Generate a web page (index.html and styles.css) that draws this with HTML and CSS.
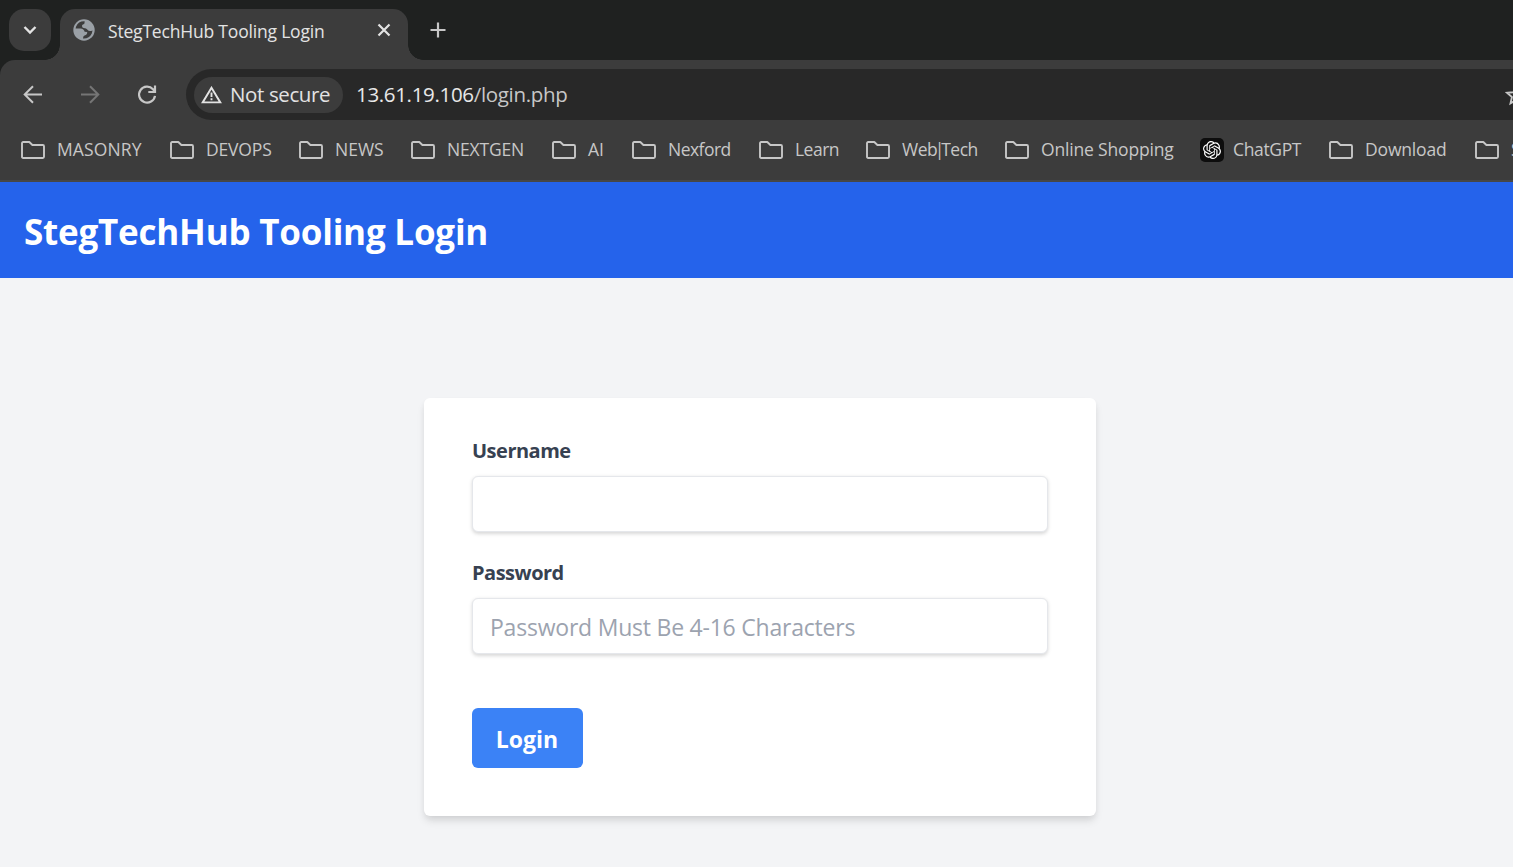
FILE: index.html
```html
<!DOCTYPE html>
<html lang="en">
<head>
<meta charset="utf-8">
<title>StegTechHub Tooling Login</title>
<link rel="stylesheet" href="styles.css">
</head>
<body>
<svg class="defs" aria-hidden="true">
  <symbol id="folder" viewBox="0 0 24 18"><path d="M1 2.200Q1 1 2.200 1H8.300L11.400 4H21.800Q23 4 23 5.200V15.800Q23 17 21.800 17H2.200Q1 17 1 15.800Z" fill="none" stroke="currentColor" stroke-width="1.900" stroke-linejoin="round"/></symbol>
</svg>
<div class="browser">
  <div class="tabstrip">
    <div class="tab-search"><svg width="16" height="10" viewBox="0 0 16 10"><path d="M2.500 2 8 7.500 13.500 2" fill="none" stroke="currentColor" stroke-width="2.400"/></svg></div>
    <div class="tab">
      <svg class="globe" width="22" height="22" viewBox="0 0 22 22"><circle cx="11" cy="11" r="10.700" fill="#9aa0a6"/><path d="M11.800 2.400Q5.500 2 3 7.800L2.600 9.400H7.500Q11 9.600 11.600 12.800L14.200 13Q14.500 16 11.500 16.400 10 16.700 10 19.500 16 20 18.800 14.500L19.500 11.500Q16 12.800 14.500 10.800 13.500 9.200 10.500 9 8.800 8.500 9 6.500 9.500 5.300 11.200 5.100Z" fill="#3c3c3c"/></svg>
      <span class="tab-title">StegTechHub Tooling Login</span>
      <svg class="tab-close" width="14" height="14" viewBox="0 0 14 14"><path d="M1.500 1.500 12.500 12.500M12.500 1.500 1.500 12.500" stroke="currentColor" stroke-width="2.200"/></svg>
    </div>
    <svg class="new-tab" width="16" height="16" viewBox="0 0 16 16"><path d="M8 .5V15.500M.5 8H15.500" stroke="#c7c7c7" stroke-width="2.200"/></svg>
  </div>
  <div class="toolbar">
    <svg class="nav" width="20" height="20" viewBox="0 0 20 20"><path d="M19 9.500H2.500M10 1.200 1.700 9.500 10 17.800" fill="none" stroke="currentColor" stroke-width="2"/></svg>
    <svg class="nav nav-off" width="20" height="20" viewBox="0 0 20 20"><path d="M1 9.500H17.500M10 1.200 18.300 9.500 10 17.800" fill="none" stroke="currentColor" stroke-width="2"/></svg>
    <svg class="nav" width="20" height="20" viewBox="0 0 20 20"><path d="M18 10.800A8 8 0 1 1 16 4.200L18 6.500M18 .5V7H11.300" fill="none" stroke="currentColor" stroke-width="2.200"/></svg>
    <div class="omnibox">
      <div class="chip">
        <svg width="22" height="18" viewBox="0 0 22 18"><path d="M10.500 1.700 19.300 16.400H1.700Z" fill="none" stroke="currentColor" stroke-width="1.900"/><path d="M10.500 6.500V11M10.500 12.300V14.300" stroke="currentColor" stroke-width="1.900"/></svg>
        <span class="chip-text">Not secure</span>
      </div>
      <span class="url">13.61.19.106<span class="path">/login.php</span></span>
      <svg class="star" width="22" height="22" viewBox="0 0 24 24"><path d="M12 2.500 14.700 9 21.800 9.600 16.400 14.200 18 21.100 12 17.400 6 21.100 7.600 14.200 2.200 9.600 9.300 9Z" fill="none" stroke="currentColor" stroke-width="2"/></svg>
    </div>
  </div>
  <div class="bookmarks">
    <div class="bm caps-wide"><svg class="folder"><use href="#folder"/></svg><span>MASONRY</span></div>
    <div class="bm caps"><svg class="folder"><use href="#folder"/></svg><span>DEVOPS</span></div>
    <div class="bm"><svg class="folder"><use href="#folder"/></svg><span>NEWS</span></div>
    <div class="bm caps"><svg class="folder"><use href="#folder"/></svg><span>NEXTGEN</span></div>
    <div class="bm"><svg class="folder"><use href="#folder"/></svg><span>AI</span></div>
    <div class="bm tight"><svg class="folder"><use href="#folder"/></svg><span>Nexford</span></div>
    <div class="bm tight"><svg class="folder"><use href="#folder"/></svg><span>Learn</span></div>
    <div class="bm tight"><svg class="folder"><use href="#folder"/></svg><span>Web<span class="bar">|</span>Tech</span></div>
    <div class="bm caps"><svg class="folder"><use href="#folder"/></svg><span>Online Shopping</span></div>
    <div class="bm bm-gpt"><div class="gpt"><svg width="18" height="18" viewBox="0 0 24 24"><path fill="#fff" d="M22.2819 9.8211a5.9847 5.9847 0 0 0-.5157-4.9108 6.0462 6.0462 0 0 0-6.5098-2.9A6.0651 6.0651 0 0 0 4.9807 4.1818a5.9847 5.9847 0 0 0-3.9977 2.9 6.0462 6.0462 0 0 0 .7427 7.0966 5.98 5.98 0 0 0 .511 4.9107 6.051 6.051 0 0 0 6.5146 2.9001A5.9847 5.9847 0 0 0 13.2599 24a6.0557 6.0557 0 0 0 5.7718-4.2058 5.9894 5.9894 0 0 0 3.9977-2.9001 6.0557 6.0557 0 0 0-.7475-7.0729zm-9.022 12.6081a4.4755 4.4755 0 0 1-2.8764-1.0408l.1419-.0804 4.7783-2.7582a.7948.7948 0 0 0 .3927-.6813v-6.7369l2.02 1.1686a.071.071 0 0 1 .038.052v5.5826a4.504 4.504 0 0 1-4.4945 4.4944zm-9.6607-4.1254a4.4708 4.4708 0 0 1-.5346-3.0137l.142.0852 4.783 2.7582a.7712.7712 0 0 0 .7806 0l5.8428-3.3685v2.3324a.0804.0804 0 0 1-.0332.0615L9.74 19.9502a4.4992 4.4992 0 0 1-6.1408-1.6464zM2.3408 7.8956a4.485 4.485 0 0 1 2.3655-1.9728V11.6a.7664.7664 0 0 0 .3879.6765l5.8144 3.3543-2.0201 1.1685a.0757.0757 0 0 1-.071 0l-4.8303-2.7865A4.504 4.504 0 0 1 2.3408 7.872zm16.5963 3.8558L13.1038 8.364 15.1192 7.2a.0757.0757 0 0 1 .071 0l4.8303 2.7913a4.4944 4.4944 0 0 1-.6765 8.1042v-5.6772a.79.79 0 0 0-.407-.667zm2.0107-3.0231l-.142-.0852-4.7735-2.7818a.7759.7759 0 0 0-.7854 0L9.409 9.2297V6.8974a.0662.0662 0 0 1 .0284-.0615l4.8303-2.7866a4.4992 4.4992 0 0 1 6.6802 4.66zM8.3065 12.863l-2.02-1.1638a.0804.0804 0 0 1-.038-.0567V6.0742a4.4992 4.4992 0 0 1 7.3757-3.4537l-.142.0805L8.704 5.459a.7948.7948 0 0 0-.3927.6813zm1.0976-2.3654l2.602-1.4998 2.6069 1.4998v2.9994l-2.5974 1.4997-2.6067-1.4997Z"/></svg></div><span>ChatGPT</span></div>
    <div class="bm caps"><svg class="folder"><use href="#folder"/></svg><span>Download</span></div>
    <div class="bm"><svg class="folder"><use href="#folder"/></svg><span>S</span></div>
  </div>
</div>
<header class="site-header"><h1>StegTechHub Tooling Login</h1></header>
<main>
  <form class="card">
    <label for="user">Username</label>
    <input id="user" type="text">
    <label for="pass">Password</label>
    <input id="pass" type="password" placeholder="Password Must Be 4-16 Characters">
    <button type="button">Login</button>
  </form>
</main>
</body>
</html>
```
FILE: styles.css
```css
* { box-sizing: border-box; }
body { margin: 0; height: 867px; overflow: hidden; background: #f3f4f6; font-family: "Segoe UI", "Open Sans", "Noto Sans", sans-serif; }
svg { display: block; flex: none; }
.defs { display: none; }
.browser { background: #1f2120; color: #e3e3e3; }
.tabstrip { display: flex; height: 60px; padding: 9px 0 0 9px; }
.tab-search { width: 42px; height: 42px; border-radius: 15px; background: #3c3c3c; display: grid; place-items: center; }
.tab { position: relative; display: flex; align-items: center; width: 348px; height: 51px; margin-left: 9px; padding: 0 17px 9px 13px; background: #3c3c3c; border-radius: 15px 15px 0 0; }
.tab::before, .tab::after { content: ""; position: absolute; bottom: 0; width: 15px; height: 15px; }
.tab::before { right: 100%; background: radial-gradient(circle at 0 0, transparent 14.500px, #3c3c3c 15px); }
.tab::after { left: 100%; background: radial-gradient(circle at 100% 0, transparent 14.500px, #3c3c3c 15px); }
.tab-title { flex: 1; margin-left: 13px; padding-top: 2px; font-size: 17.500px; letter-spacing: -.19px; white-space: nowrap; }
.new-tab { margin: 13px 0 0 22px; }
.toolbar { display: flex; align-items: center; gap: 37px; height: 60px; padding-left: 23px; padding-top: 9px; background: #3c3c3c; border-radius: 15px 0 0 0; color: #c7c7c7; }
.nav-off { color: #757575; }
.omnibox { display: flex; align-items: center; flex: 1; height: 51px; margin-left: -8px; padding-left: 8px; background: #282828; border-radius: 26px 0 0 26px; overflow: hidden; }
.chip { display: flex; align-items: center; width: 149px; height: 36px; padding-left: 7px; border-radius: 18px; background: #3c3c3c; color: #e3e3e3; }
.chip-text { margin-left: 7px; padding-bottom: 2px; font-size: 20.500px; letter-spacing: -.38px; white-space: nowrap; }
.url { flex: 1; margin-left: 13px; padding-bottom: 2px; font-size: 20.500px; letter-spacing: -.33px; color: #e8e8e8; white-space: nowrap; }
.path { color: #c7c7c7; }
.star { margin-right: -14px; }
.bookmarks { display: grid; grid-template-columns: 149px 129px 112px 141px 80px 127px 107px 139px 195px 129px 146px 60px; align-items: center; height: 62px; padding: 0 0 0 21px; background: #3c3c3c; border-bottom: 2px solid #474747; color: #c7c7c7; font-size: 17.500px; overflow: hidden; }
.bm { display: flex; align-items: center; gap: 12px; white-space: nowrap; }
.bm > span { padding-bottom: 2px; }
.caps-wide { letter-spacing: .13px; }
.caps { letter-spacing: -.17px; }
.tight { letter-spacing: -.52px; }
.bar { margin: 0 -2.500px; }
.folder { width: 24px; height: 18px; }
.gpt { width: 24px; height: 24px; border-radius: 5px; background: #0d0d0d; display: grid; place-items: center; }
.bm-gpt { gap: 9px; letter-spacing: -.35px; }
.site-header { display: flex; align-items: center; height: 96px; padding: 4px 24px 0; background: #2563eb; }
h1 { margin: 0; color: #fff; font-size: 35px; line-height: 48px; font-weight: 700; letter-spacing: -.22px; white-space: nowrap; }
main { display: flex; justify-content: center; padding: 120px 0 0 7px; }
.card { display: flex; flex-direction: column; align-items: flex-start; width: 672px; height: 418px; padding: 36px 48px; background: #fff; border-radius: 6px; box-shadow: 0 6px 9px -1px rgba(0,0,0,.1), 0 3px 6px -1px rgba(0,0,0,.06); }
label { height: 42px; line-height: 34px; font-size: 20px; font-weight: 700; letter-spacing: -.5px; color: #374151; }
input { width: 576px; height: 56px; margin: 0 0 24px; padding: 1px 17px 0; border: 1px solid #e5e7eb; border-radius: 6px; background: #fff; box-shadow: 0 1.500px 4px rgba(0,0,0,.1), 0 1.500px 3px rgba(0,0,0,.06); font: 23px "Segoe UI", "Open Sans", "Noto Sans", sans-serif; letter-spacing: -.22px; }
input::placeholder { color: #9ca3af; opacity: 1; }
#pass { margin-bottom: 54px; }
button { width: 111px; height: 60px; padding: 1px 1px 0 0; border: 0; border-radius: 6px; background: #3b82f6; color: #fff; font: 700 23px "Segoe UI", "Open Sans", "Noto Sans", sans-serif; }
```
